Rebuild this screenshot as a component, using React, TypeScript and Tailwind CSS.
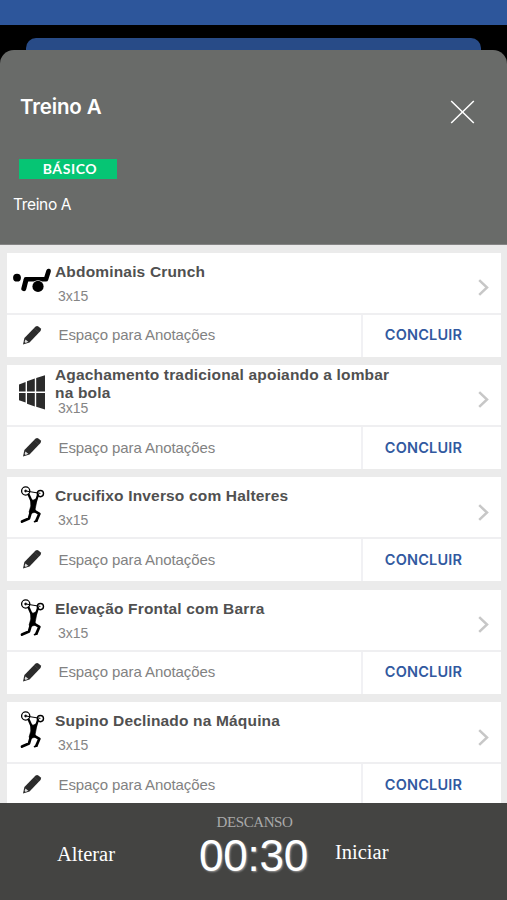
type IconName = 'crunch' | 'wall' | 'lifter';

type Exercise = {
  name: string;
  sets: string;
  icon: IconName;
};

const exercises: Exercise[] = [
  { name: 'Abdominais Crunch', sets: '3x15', icon: 'crunch' },
  { name: 'Agachamento tradicional apoiando a lombar na bola', sets: '3x15', icon: 'wall' },
  { name: 'Crucifixo Inverso com Halteres', sets: '3x15', icon: 'lifter' },
  { name: 'Elevação Frontal com Barra', sets: '3x15', icon: 'lifter' },
  { name: 'Supino Declinado na Máquina', sets: '3x15', icon: 'lifter' },
];

function CrunchIcon() {
  return (
    <svg width="48" height="60" viewBox="0 0 48 60" fill="none">
      <circle cx="10" cy="24.7" r="3.9" fill="#000" />
      <path d="M16.8 35.6 19 27" stroke="#000" strokeWidth="5" strokeLinecap="round" />
      <path
        d="M19 26.3H39L41.6 18"
        stroke="#000"
        strokeWidth="4.6"
        strokeLinecap="round"
        strokeLinejoin="round"
      />
      <circle cx="31" cy="33.4" r="6.2" fill="#fff" />
      <circle cx="31" cy="33.4" r="5.6" fill="#000" />
    </svg>
  );
}

function WallIcon() {
  return (
    <svg width="48" height="60" viewBox="0 0 48 60" fill="#2b2b2b">
      <path d="M12 19.5 18.6 17V26.5H12ZM12 28H18.6V37.6L12 35.3Z" />
      <path d="M20 16.2 27.8 13.4V26.5H20ZM20 28H27.8V41.4L20 38.8Z" />
      <path d="M29.2 13 38 10.3V26.5H29.2ZM29.2 28H38V44.4L29.2 41.8Z" />
    </svg>
  );
}

function LifterIcon() {
  return (
    <svg width="48" height="60" viewBox="0 0 48 60" fill="none" stroke="#000">
      <circle cx="18.7" cy="14" r="4.1" strokeWidth="1.3" />
      <circle cx="18.7" cy="14" r="1.1" fill="#000" strokeWidth="0.6" />
      <circle cx="33.4" cy="16.6" r="3.1" strokeWidth="1.4" />
      <path d="M20 14.2 33.4 16.4" strokeWidth="1" />
      <path
        d="M21.6 17.6 24.2 23.2M31 18 29 24"
        strokeWidth="2.3"
        strokeLinecap="round"
        strokeLinejoin="round"
      />
      <path
        d="M23.4 22 26 23.2 29.6 21.6 29.6 25 28.2 32 28.4 35 24 36.5 22 35.2 23.8 29Z"
        fill="#000"
        strokeWidth="0.6"
        strokeLinejoin="round"
      />
      <path
        d="M24 34.5 22 41.4 15 44.6M26.5 33.4 32.4 36.8 29.4 43.6"
        strokeWidth="2.7"
        strokeLinecap="round"
        strokeLinejoin="round"
      />
      <path d="M29.6 44 27.6 44.6" strokeWidth="1.8" strokeLinecap="round" />
    </svg>
  );
}

function ExerciseIcon({ name }: { name: IconName }) {
  if (name === 'crunch') return <CrunchIcon />;
  if (name === 'wall') return <WallIcon />;
  return <LifterIcon />;
}

function PencilIcon() {
  return (
    <svg width="20" height="20" viewBox="0 0 20 20" className="-mt-[2px]">
      <path
        d="M13.6 1.6Q15 .5 16.4 1.4L18.5 3.2Q19.6 4.4 18.5 5.9L7.5 17.4 1 19.4 2.4 13Z"
        fill="#2b2b2b"
      />
      <path d="M12.3 3.2 17 7.6" stroke="#555" strokeWidth="0.5" />
      <path d="M3.4 14.4 6.3 16.8 3.6 17.9 2.6 17Z" fill="#ddd" />
    </svg>
  );
}

function ExerciseCard({ name, sets, icon }: Exercise) {
  return (
    <div className="h-[104px] shrink-0 bg-white">
      <div className="flex h-[62px] border-b-2 border-[#efeff1]">
        <div className="w-12 shrink-0">
          <ExerciseIcon name={icon} />
        </div>
        <div className="w-[370px]">
          <div className="flex h-[38px] items-center text-[15.5px] leading-[18px] font-bold tracking-[0.17px] text-[#505050]">
            <span className="w-[345px]">{name}</span>
          </div>
          <div className="-mt-px pl-[3px] text-[14px] leading-[13px] text-[#858585]">{sets}</div>
        </div>
        <div className="flex flex-1 items-start justify-end pt-[26.5px] pr-3">
          <svg width="11" height="17" viewBox="0 0 11 17" fill="none">
            <path d="M1.2 1.2 9 8.5 1.2 15.8" stroke="#c7c7c7" strokeWidth="2.5" />
          </svg>
        </div>
      </div>
      <div className="flex h-[42px]">
        <div className="flex w-[356px] items-center border-r-2 border-[#f1f1f4] pl-[15px]">
          <PencilIcon />
          <span className="pl-[16.5px] text-[15px] tracking-[-0.09px] text-[#828282]">
            Espaço para Anotações
          </span>
        </div>
        <button
          type="button"
          className="flex-1 pr-[17px] pb-px font-[Inter] text-[14.5px] font-semibold tracking-[0.2px] text-[#3159a0]"
        >
          CONCLUIR
        </button>
      </div>
    </div>
  );
}

function WorkoutHeader() {
  return (
    <header className="flex h-[195px] flex-col items-start rounded-t-[14px] border-b border-[#858585] bg-[#696b69] font-[Inter] text-white">
      <div className="flex w-full justify-between pt-[43px] pr-[32px] pl-5">
        <h1 className="text-[20.5px] leading-[28px] font-semibold tracking-[-0.15px]">Treino A</h1>
        <button type="button" aria-label="Fechar" className="pt-[7px]">
          <svg width="25" height="24" viewBox="0 0 25 24" fill="none">
            <path d="M1.2 1 23.8 23M23.8 1 1.2 23" stroke="#fff" strokeWidth="1.5" />
          </svg>
        </button>
      </div>
      <div className="mt-[35px] ml-[19px] flex h-5 w-[98px] items-center justify-center bg-[#06c574] pb-[2px] pl-1 font-[Lato] text-[14px] font-bold tracking-[0.6px]">
        BÁSICO
      </div>
      <p className="mt-[14px] ml-[13px] text-[15.5px] leading-6 tracking-[-0.35px]">Treino A</p>
    </header>
  );
}

function RestTimer() {
  return (
    <footer className="flex h-[97px] shrink-0 bg-[#444442] font-['Liberation_Serif',serif] text-white">
      <button type="button" className="h-[103px] w-[172px] text-[20.5px]">
        Alterar
      </button>
      <div className="flex w-[163px] flex-col items-center pt-[10px]">
        <span className="pl-[2px] text-[15px] leading-[18px] tracking-[-0.4px] text-[#aaa]">
          DESCANSO
        </span>
        <span className="font-['Liberation_Sans',sans-serif] text-[44px] leading-[50px] tracking-[-0.2px] [text-shadow:1px_1px_2px_#999]">
          00:30
        </span>
      </div>
      <button type="button" className="h-[98px] w-[53px] text-[20.5px]">
        Iniciar
      </button>
    </footer>
  );
}

export default function App() {
  return (
    <div className="flex h-[900px] w-[507px] flex-col overflow-hidden bg-black font-['Liberation_Sans',Arial,sans-serif]">
      <div className="h-[25px] shrink-0 bg-[#2d569b]" />
      <div className="mx-[26px] mt-[13px] h-3 shrink-0 rounded-t-[10px] bg-[#284b87]" />
      <WorkoutHeader />
      <main className="flex min-h-0 flex-1 flex-col gap-[8.4px] overflow-hidden bg-[#ebebeb] pt-[7.5px] pr-[6px] pl-[7px]">
        {exercises.map((exercise) => (
          <ExerciseCard key={exercise.name} {...exercise} />
        ))}
      </main>
      <RestTimer />
    </div>
  );
}
